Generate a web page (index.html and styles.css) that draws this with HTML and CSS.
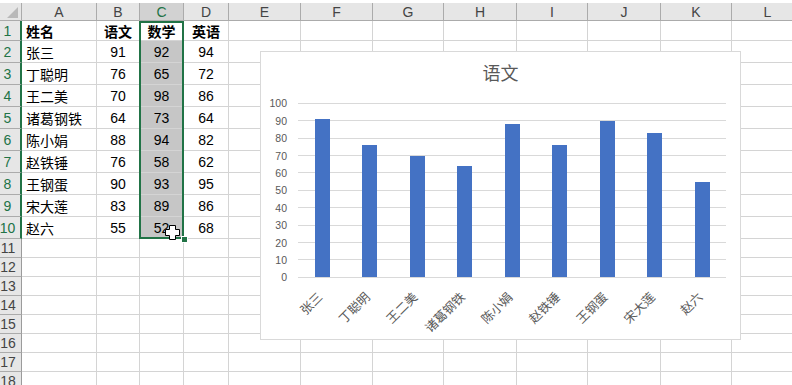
FILE: index.html
```html
<!DOCTYPE html>
<html lang="zh">
<head>
<meta charset="utf-8">
<title>语文 成绩</title>
<link rel="stylesheet" href="styles.css">
</head>
<body>
<div class="sheet">
  <div class="row hdr">
    <div class="corner"></div>
    <div class="ch">A</div><div class="ch">B</div><div class="ch selh">C</div><div class="ch">D</div>
    <div class="ch">E</div><div class="ch">F</div><div class="ch">G</div><div class="ch">H</div>
    <div class="ch">I</div><div class="ch">J</div><div class="ch">K</div><div class="ch">L</div>
  </div>
  <div class="row r20">
    <div class="rh sel">1</div><div class="name b">姓名</div><div class="num b">语文</div><div class="num b">数学</div><div class="num b">英语</div>
    <div></div><div></div><div></div><div></div><div></div><div></div><div></div><div></div>
  </div>
  <div class="row r22">
    <div class="rh sel">2</div><div class="name">张三</div><div class="num">91</div><div class="num selc">92</div><div class="num">94</div>
    <div></div><div></div><div></div><div></div><div></div><div></div><div></div><div></div>
  </div>
  <div class="row r22">
    <div class="rh sel">3</div><div class="name">丁聪明</div><div class="num">76</div><div class="num selc">65</div><div class="num">72</div>
    <div></div><div></div><div></div><div></div><div></div><div></div><div></div><div></div>
  </div>
  <div class="row r22">
    <div class="rh sel">4</div><div class="name">王二美</div><div class="num">70</div><div class="num selc">98</div><div class="num">86</div>
    <div></div><div></div><div></div><div></div><div></div><div></div><div></div><div></div>
  </div>
  <div class="row r22">
    <div class="rh sel">5</div><div class="name">诸葛钢铁</div><div class="num">64</div><div class="num selc">73</div><div class="num">64</div>
    <div></div><div></div><div></div><div></div><div></div><div></div><div></div><div></div>
  </div>
  <div class="row r22">
    <div class="rh sel">6</div><div class="name">陈小娟</div><div class="num">88</div><div class="num selc">94</div><div class="num">82</div>
    <div></div><div></div><div></div><div></div><div></div><div></div><div></div><div></div>
  </div>
  <div class="row r22">
    <div class="rh sel">7</div><div class="name">赵铁锤</div><div class="num">76</div><div class="num selc">58</div><div class="num">62</div>
    <div></div><div></div><div></div><div></div><div></div><div></div><div></div><div></div>
  </div>
  <div class="row r22">
    <div class="rh sel">8</div><div class="name">王钢蛋</div><div class="num">90</div><div class="num selc">93</div><div class="num">95</div>
    <div></div><div></div><div></div><div></div><div></div><div></div><div></div><div></div>
  </div>
  <div class="row r22">
    <div class="rh sel">9</div><div class="name">宋大莲</div><div class="num">83</div><div class="num selc">89</div><div class="num">86</div>
    <div></div><div></div><div></div><div></div><div></div><div></div><div></div><div></div>
  </div>
  <div class="row r22">
    <div class="rh sel">10</div><div class="name">赵六</div><div class="num">55</div><div class="num selc">52</div><div class="num">68</div>
    <div></div><div></div><div></div><div></div><div></div><div></div><div></div><div></div>
  </div>
  <div class="row r19"><div class="rh">11</div><div></div><div></div><div></div><div></div><div></div><div></div><div></div><div></div><div></div><div></div><div></div><div></div></div>
  <div class="row r19"><div class="rh">12</div><div></div><div></div><div></div><div></div><div></div><div></div><div></div><div></div><div></div><div></div><div></div><div></div></div>
  <div class="row r19"><div class="rh">13</div><div></div><div></div><div></div><div></div><div></div><div></div><div></div><div></div><div></div><div></div><div></div><div></div></div>
  <div class="row r19"><div class="rh">14</div><div></div><div></div><div></div><div></div><div></div><div></div><div></div><div></div><div></div><div></div><div></div><div></div></div>
  <div class="row r19"><div class="rh">15</div><div></div><div></div><div></div><div></div><div></div><div></div><div></div><div></div><div></div><div></div><div></div><div></div></div>
  <div class="row r19"><div class="rh">16</div><div></div><div></div><div></div><div></div><div></div><div></div><div></div><div></div><div></div><div></div><div></div><div></div></div>
  <div class="row r19"><div class="rh">17</div><div></div><div></div><div></div><div></div><div></div><div></div><div></div><div></div><div></div><div></div><div></div><div></div></div>
  <div class="row r19"><div class="rh">18</div><div></div><div></div><div></div><div></div><div></div><div></div><div></div><div></div><div></div><div></div><div></div><div></div></div>

  <div class="selection"></div>
  <div class="fill-handle"></div>
  <svg class="cursor" width="17" height="17" viewBox="0 0 17 17">
    <polygon points="5.5,1.5 11.5,1.5 11.5,5.5 15.5,5.5 15.5,11.5 11.5,11.5 11.5,15.5 5.5,15.5 5.5,11.5 1.5,11.5 1.5,5.5 5.5,5.5" fill="#fff" stroke="#000" stroke-width="1"/>
  </svg>

  <div class="chart">
    <svg width="479" height="287" viewBox="0 0 479 287">
      <text class="title" x="239.5" y="22" text-anchor="middle" dominant-baseline="central">语文</text>
      <g class="grid" shape-rendering="crispEdges">
        <line x1="37.3" x2="464.7" y1="51.5" y2="51.5"/>
        <line x1="37.3" x2="464.7" y1="68.5" y2="68.5"/>
        <line x1="37.3" x2="464.7" y1="86.5" y2="86.5"/>
        <line x1="37.3" x2="464.7" y1="103.5" y2="103.5"/>
        <line x1="37.3" x2="464.7" y1="120.5" y2="120.5"/>
        <line x1="37.3" x2="464.7" y1="138.5" y2="138.5"/>
        <line x1="37.3" x2="464.7" y1="155.5" y2="155.5"/>
        <line x1="37.3" x2="464.7" y1="173.5" y2="173.5"/>
        <line x1="37.3" x2="464.7" y1="190.5" y2="190.5"/>
        <line x1="37.3" x2="464.7" y1="207.5" y2="207.5"/>
        <line x1="37.3" x2="464.7" y1="225.5" y2="225.5"/>
      </g>
      <g class="ylab" text-anchor="end" dominant-baseline="central">
        <text x="26" y="51.3">100</text>
        <text x="26" y="68.7">90</text>
        <text x="26" y="86.1">80</text>
        <text x="26" y="103.5">70</text>
        <text x="26" y="120.9">60</text>
        <text x="26" y="138.3">50</text>
        <text x="26" y="155.7">40</text>
        <text x="26" y="173.1">30</text>
        <text x="26" y="190.5">20</text>
        <text x="26" y="207.9">10</text>
        <text x="26" y="225.3">0</text>
      </g>
      <g class="bars" shape-rendering="crispEdges">
        <rect x="53.5" y="67" width="15" height="158.3"/>
        <rect x="101" y="93.1" width="15" height="132.2"/>
        <rect x="148.5" y="103.5" width="15" height="121.8"/>
        <rect x="196" y="113.9" width="15" height="111.4"/>
        <rect x="243.5" y="72.2" width="15" height="153.1"/>
        <rect x="291" y="93.1" width="15" height="132.2"/>
        <rect x="338.5" y="68.7" width="15" height="156.6"/>
        <rect x="386" y="80.9" width="15" height="144.4"/>
        <rect x="433.5" y="129.6" width="15" height="95.7"/>
      </g>
      <g class="xlab" text-anchor="end" dominant-baseline="central">
        <text transform="translate(59.5,243) rotate(-45)">张三</text>
        <text transform="translate(107,243) rotate(-45)">丁聪明</text>
        <text transform="translate(154.5,243) rotate(-45)">王二美</text>
        <text transform="translate(202,243) rotate(-45)">诸葛钢铁</text>
        <text transform="translate(249.5,243) rotate(-45)">陈小娟</text>
        <text transform="translate(297,243) rotate(-45)">赵铁锤</text>
        <text transform="translate(344.5,243) rotate(-45)">王钢蛋</text>
        <text transform="translate(392,243) rotate(-45)">宋大莲</text>
        <text transform="translate(439.5,243) rotate(-45)">赵六</text>
      </g>
    </svg>
  </div>
</div>
</body>
</html>
```
FILE: styles.css
```css
html, body {
  margin: 0;
  padding: 0;
  background: #fff;
  overflow: hidden;
}
body {
  width: 792px;
  height: 385px;
  font-family: "Liberation Sans", "Noto Sans CJK SC", sans-serif;
  font-size: 14px;
  color: #000;
}
.sheet {
  position: relative;
  padding-top: 3px;
  width: 804px;
}
.row {
  display: grid;
  grid-template-columns: 22px 75px 43px 44px 45px 72px 72px 71px 73px 71px 73px 71px 72px;
}
.row > div {
  box-sizing: border-box;
  border-right: 1px solid #d4d4d4;
  border-bottom: 1px solid #d4d4d4;
  display: flex;
  align-items: center;
  overflow: hidden;
  white-space: nowrap;
}
.hdr { height: 18px; }
.r20 { height: 20px; }
.r22 { height: 22px; }
.r19 { height: 19px; }

.row > .ch {
  background: #e6e6e6;
  border-right: 1px solid #ababab;
  border-bottom: 1px solid #ababab;
  justify-content: center;
  color: #444;
  font-size: 14px;
}
.row > .ch.selh {
  background: #d2d2d2;
  color: #217346;
}
.row > .corner {
  background: #e6e6e6;
  border-right: 1px solid #ababab;
  border-bottom: 1px solid #ababab;
  align-items: flex-end;
  justify-content: flex-end;
  padding: 0 3px 2px 0;
}
.corner::after {
  content: "";
  width: 0;
  height: 0;
  border-left: 11px solid transparent;
  border-bottom: 11px solid #b9b9b9;
}
.row > .rh {
  background: #e6e6e6;
  border-right: 1px solid #9b9b9b;
  border-bottom: 1px solid #ababab;
  justify-content: center;
  padding-right: 5px;
  color: #444;
  font-size: 14px;
}
.row > .rh.sel {
  color: #217346;
  border-right: 2px solid #217346;
}
.name {
  padding-left: 4px;
}
.row > .num {
  justify-content: center;
}
.b {
  font-weight: bold;
}
.row > .selc {
  background: #c6c6c6;
}

.selection {
  position: absolute;
  left: 139px;
  top: 21px;
  width: 45px;
  height: 218px;
  border: 2px solid #217346;
  box-sizing: border-box;
}
.fill-handle {
  position: absolute;
  left: 181px;
  top: 236px;
  width: 5px;
  height: 5px;
  background: #217346;
  border: 1px solid #fff;
}
.cursor {
  position: absolute;
  left: 164px;
  top: 224px;
}

.chart {
  position: absolute;
  left: 260px;
  top: 51px;
  width: 481px;
  height: 289px;
  box-sizing: border-box;
  border: 1px solid #d9d9d9;
  background: #fff;
}
.chart svg {
  display: block;
  font-family: "Liberation Sans", "Noto Sans CJK SC", sans-serif;
}
.title {
  font-size: 18px;
  fill: #595959;
}
.grid line {
  stroke: #d9d9d9;
  stroke-width: 1;
}
.ylab {
  font-size: 10.5px;
  fill: #595959;
}
.bars rect {
  fill: #4472c4;
}
.xlab {
  font-size: 12.5px;
  fill: #595959;
}
```
